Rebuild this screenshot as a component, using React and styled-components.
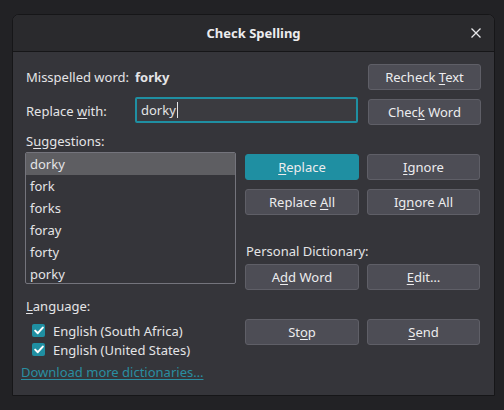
import styled, { createGlobalStyle } from 'styled-components';

const Global = createGlobalStyle`
  html, body {
    margin: 0;
    padding: 0;
    background: #222225;
  }
  body {
    font-family: "Noto Sans", "DejaVu Sans", sans-serif;
    font-size: 13px;
    color: #e4e4e6;
  }
`;

const Desktop = styled.div`
  width: 504px;
  height: 410px;
  padding: 14px 0 0 12px;
  box-sizing: border-box;
`;

const Window = styled.div`
  width: 483px;
  height: 382px;
  box-sizing: border-box;
  border: 1px solid #161618;
  border-radius: 7px 7px 0 0;
  background: #35353a;
  overflow: hidden;
  display: flex;
  flex-direction: column;
`;

const TitleBar = styled.div`
  height: 36px;
  flex: none;
  background: #2a2a2d;
  border-bottom: 1px solid #161618;
  display: flex;
  align-items: center;
  justify-content: center;
  position: relative;
  font-weight: bold;
  font-size: 13px;
  color: #ececee;
`;

const CloseButton = styled.span`
  position: absolute;
  right: 12px;
  top: 12px;
  width: 12px;
  height: 12px;
  display: flex;
`;

const Body = styled.div`
  padding: 12px 13px 0 12px;
  display: flex;
  flex-direction: column;
`;

const TopRow = styled.div`
  display: flex;
  align-items: center;
  height: ${(p) => p.$h}px;
  margin-bottom: ${(p) => p.$mb || 0}px;
`;

const FieldLabel = styled.div`
  width: 109px;
  padding-left: 1px;
  flex: none;
`;

const Word = styled.div`
  font-weight: bold;
  flex: 1;
`;

const Input = styled.div`
  width: 223px;
  height: 26px;
  box-sizing: border-box;
  border: 2px solid #1f8fa2;
  border-radius: 2px;
  background: #3b3b40;
  padding: 0 4px;
  display: flex;
  align-items: center;
  margin-right: 9px;
  align-self: flex-start;
`;

const Caret = styled.span`
  display: inline-block;
  width: 1px;
  height: 16px;
  background: #e4e4e6;
  margin-left: 1px;
`;

const Button = styled.div`
  width: ${(p) => p.$w || 113}px;
  height: 26px;
  box-sizing: border-box;
  border: 1px solid ${(p) => (p.$primary ? '#1f8fa2' : '#5f5f67')};
  border-radius: 3px;
  background: ${(p) => (p.$primary ? '#1f8fa2' : '#4d4d55')};
  color: #ececee;
  display: flex;
  align-items: center;
  justify-content: center;
  flex: none;
  margin-left: auto;
  align-self: ${(p) => p.$self || 'auto'};
  white-space: pre;
`;

const U = styled.u`
  text-underline-offset: 2px;
`;

const Main = styled.div`
  display: flex;
  gap: 9px;
`;

const LeftCol = styled.div`
  width: 211px;
  display: flex;
  flex-direction: column;
`;

const Label = styled.div`
  height: 18px;
  line-height: 18px;
  padding-left: 1px;
  margin-top: ${(p) => p.$mt || 0}px;
  margin-bottom: ${(p) => p.$mb || 0}px;
`;

const List = styled.div`
  height: 132px;
  box-sizing: border-box;
  border: 1px solid #74747c;
  border-radius: 2px;
  background: #35353a;
  overflow: hidden;
`;

const ListItem = styled.div`
  height: 22px;
  line-height: 22px;
  padding-left: 4px;
  background: ${(p) => (p.$selected ? '#5e5e62' : 'transparent')};
`;

const CheckRow = styled.div`
  display: flex;
  align-items: center;
  height: 19px;
  padding-left: 7px;
  gap: 8px;
`;

const Box = styled.span`
  width: 13px;
  height: 13px;
  border-radius: 2px;
  background: #1f8fa2;
  display: flex;
  align-items: center;
  justify-content: center;
`;

const Link = styled.a`
  color: #2a8ea1;
  text-decoration: underline;
  text-underline-offset: 2px;
  margin-top: 4px;
  margin-left: -4px;
  height: 18px;
  line-height: 18px;
`;

const RightCol = styled.div`
  width: 235px;
  padding-top: 29px;
  display: flex;
  flex-direction: column;
`;

const ButtonRow = styled.div`
  display: flex;
  justify-content: space-between;
  margin-bottom: ${(p) => p.$mb || 0}px;
  & > div {
    margin-left: 0;
  }
`;

const Check = () => (
  <svg width="10" height="9" viewBox="0 0 10 9">
    <path d="M1.2 4.6 L3.8 7.2 L8.8 1.6" fill="none" stroke="#fff" strokeWidth="2" strokeLinecap="round" strokeLinejoin="round" />
  </svg>
);

const suggestions = ['dorky', 'fork', 'forks', 'foray', 'forty', 'porky'];

export default function App() {
  return (
    <Desktop>
      <Global />
      <Window>
        <TitleBar>
          Check Spelling
          <CloseButton>
            <svg width="12" height="12" viewBox="0 0 12 12">
              <path d="M1.5 1.5 L10.5 10.5 M10.5 1.5 L1.5 10.5" stroke="#e8e8ea" strokeWidth="1.3" />
            </svg>
          </CloseButton>
        </TitleBar>
        <Body>
          <TopRow $h={26} $mb={7}>
            <FieldLabel>Misspelled word:</FieldLabel>
            <Word>forky</Word>
            <Button><span>Recheck <U>T</U>ext</span></Button>
          </TopRow>
          <TopRow $h={28}>
            <FieldLabel>Replace <U>w</U>ith:</FieldLabel>
            <Input>dorky<Caret /></Input>
            <Button $self="flex-end"><span>Chec<U>k</U> Word</span></Button>
          </TopRow>
          <Main>
            <LeftCol>
              <Label $mt={7} $mb={2}>S<U>u</U>ggestions:</Label>
              <List>
                {suggestions.map((s, i) => (
                  <ListItem key={s} $selected={i === 0}>{s}</ListItem>
                ))}
              </List>
              <Label $mt={13} $mb={6}><U>L</U>anguage:</Label>
              <CheckRow><Box><Check /></Box>English (South Africa)</CheckRow>
              <CheckRow><Box><Check /></Box>English (United States)</CheckRow>
              <Link>Download more dictionaries…</Link>
            </LeftCol>
            <RightCol>
              <ButtonRow $mb={9}>
                <Button $w={114} $primary><span><U>R</U>eplace</span></Button>
                <Button><span><U>I</U>gnore</span></Button>
              </ButtonRow>
              <ButtonRow>
                <Button $w={114}><span>Replace <U>A</U>ll</span></Button>
                <Button><span>Ig<U>n</U>ore All</span></Button>
              </ButtonRow>
              <Label $mt={27} $mb={4}>Personal Dictionary:</Label>
              <ButtonRow $mb={29}>
                <Button $w={114}><span>A<U>d</U>d Word</span></Button>
                <Button><span><U>E</U>dit…</span></Button>
              </ButtonRow>
              <ButtonRow>
                <Button $w={114}><span>St<U>o</U>p</span></Button>
                <Button><span><U>S</U>end</span></Button>
              </ButtonRow>
            </RightCol>
          </Main>
        </Body>
      </Window>
    </Desktop>
  );
}
